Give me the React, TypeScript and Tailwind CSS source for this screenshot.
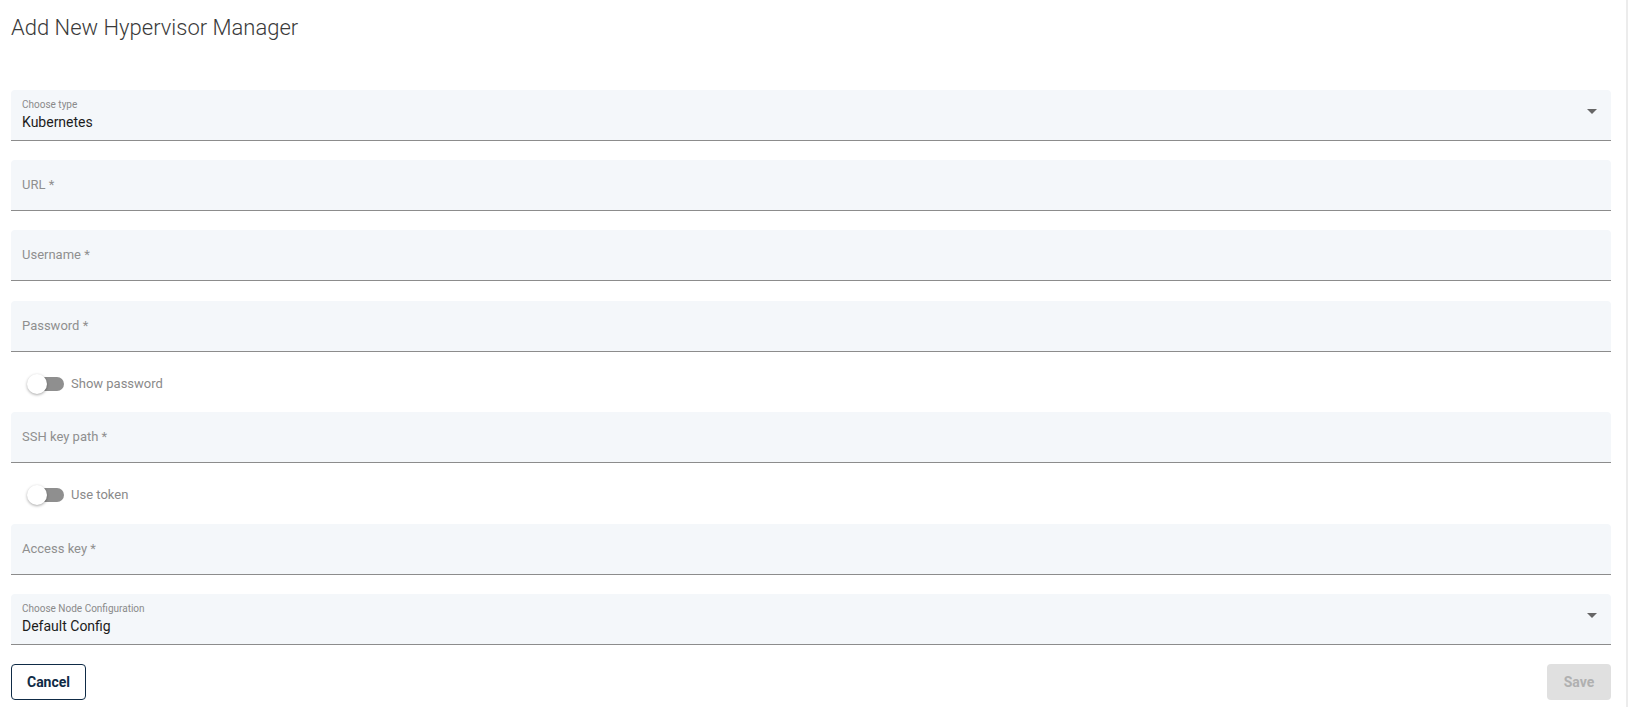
import React, { useState } from "react";

const font = { fontFamily: "Roboto, 'Noto Sans', sans-serif" };

function TextField({ label }: { label: string }) {
  return (
    <div className="flex h-[51px] items-center rounded-t-[4px] border-b border-[#8c8c8c] bg-[#f4f7fa] px-[11px]">
      <span className="text-[13px] text-[#8f8f8f]">{label}</span>
    </div>
  );
}

function SelectField({ label, value }: { label: string; value: string }) {
  return (
    <div className="relative flex h-[51px] flex-col rounded-t-[4px] border-b border-[#8c8c8c] bg-[#f4f7fa] px-[11px] pt-[8px]">
      <span className="text-[10px] leading-[13px] text-[#8a8a8a]">{label}</span>
      <span className="mt-[2px] text-[14px] leading-[18px] text-[#1c1c1c]">{value}</span>
      <svg
        className="absolute right-[14px] top-[19px]"
        width="10"
        height="5"
        viewBox="0 0 10 5"
      >
        <path d="M0 0 L10 0 L5 5 Z" fill="#666666" />
      </svg>
    </div>
  );
}

function Toggle({ label }: { label: string }) {
  const [on, setOn] = useState(false);
  return (
    <div className="flex h-[20px] items-center pl-[16px]">
      <button
        onClick={() => setOn(!on)}
        className="relative h-[20px] w-[40px]"
      >
        <span className="absolute left-[3px] top-[3px] h-[14px] w-[34px] rounded-full bg-[#8f8f8f]" />
        <span
          className={
            "absolute top-0 h-[20px] w-[20px] rounded-full bg-white shadow-[0_1px_3px_rgba(0,0,0,0.35)] " +
            (on ? "left-[20px]" : "left-0")
          }
        />
      </button>
      <span className="ml-[4px] text-[13px] text-[#8a8a8a]">{label}</span>
    </div>
  );
}

export default function App() {
  return (
    <div className="flex h-[707px] w-[1628px] bg-white" style={font}>
      <div className="flex-1 pl-[11px] pr-[15px]">
        <h1 className="pt-[15px] text-[22px] font-light leading-[26px] text-[#3a3a3a]">
          Add New Hypervisor Manager
        </h1>

        <div className="mt-[49px] flex flex-col">
          <SelectField label="Choose type" value="Kubernetes" />
          <div className="mt-[19px]">
            <TextField label="URL *" />
          </div>
          <div className="mt-[19px]">
            <TextField label="Username *" />
          </div>
          <div className="mt-[20px]">
            <TextField label="Password *" />
          </div>
          <div className="mb-[18px] mt-[22px]">
            <Toggle label="Show password" />
          </div>
          <TextField label="SSH key path *" />
          <div className="mb-[19px] mt-[22px]">
            <Toggle label="Use token" />
          </div>
          <TextField label="Access key *" />
          <div className="mt-[19px]">
            <SelectField label="Choose Node Configuration" value="Default Config" />
          </div>

          <div className="mt-[19px] flex items-center justify-between">
            <button className="h-[36px] w-[75px] rounded-[4px] border border-[#0f2b46] text-[14px] font-bold text-[#0f2b46]">
              Cancel
            </button>
            <button
              disabled
              className="h-[36px] w-[64px] rounded-[4px] bg-[#e0e0e0] text-[14px] font-bold text-[#b0b0b0]"
            >
              Save
            </button>
          </div>
        </div>
      </div>
      <div className="w-[2px] bg-[#ececec]" />
    </div>
  );
}
